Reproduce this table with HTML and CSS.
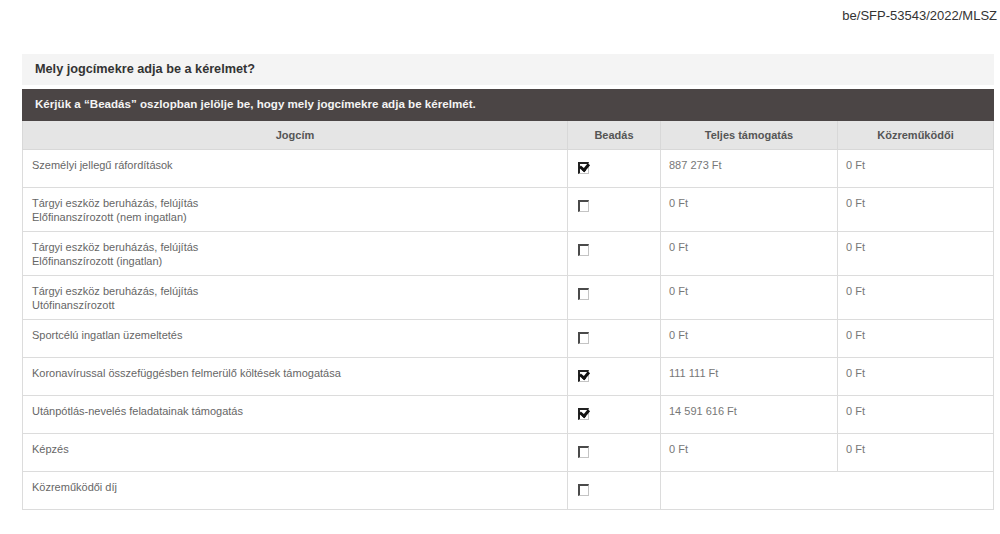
FILE: index.html
```html
<!DOCTYPE html>
<html lang="hu">
<head>
<meta charset="utf-8">
<title>Jogcímek</title>
<link rel="stylesheet" href="styles.css">
</head>
<body>
<div class="ref">be/SFP-53543/2022/MLSZ</div>
<main class="panel">
  <div class="question">Mely jogcímekre adja be a kérelmet?</div>
  <div class="notice">Kérjük a “Beadás” oszlopban jelölje be, hogy mely jogcímekre adja be kérelmét.</div>
  <table class="grid">
    <colgroup>
      <col class="c-title"><col class="c-check"><col class="c-total"><col class="c-fee">
    </colgroup>
    <thead>
      <tr><th>Jogcím</th><th>Beadás</th><th>Teljes támogatás</th><th>Közreműködői</th></tr>
    </thead>
    <tbody>
      <tr><td>Személyi jellegű ráfordítások</td><td><span class="cb on"></span></td><td>887 273 Ft</td><td>0 Ft</td></tr>
      <tr><td>Tárgyi eszköz beruházás, felújítás<br>Előfinanszírozott (nem ingatlan)</td><td><span class="cb"></span></td><td>0 Ft</td><td>0 Ft</td></tr>
      <tr><td>Tárgyi eszköz beruházás, felújítás<br>Előfinanszírozott (ingatlan)</td><td><span class="cb"></span></td><td>0 Ft</td><td>0 Ft</td></tr>
      <tr><td>Tárgyi eszköz beruházás, felújítás<br>Utófinanszírozott</td><td><span class="cb"></span></td><td>0 Ft</td><td>0 Ft</td></tr>
      <tr><td>Sportcélú ingatlan üzemeltetés</td><td><span class="cb"></span></td><td>0 Ft</td><td>0 Ft</td></tr>
      <tr><td>Koronavírussal összefüggésben felmerülő költések támogatása</td><td><span class="cb on"></span></td><td>111 111 Ft</td><td>0 Ft</td></tr>
      <tr><td>Utánpótlás-nevelés feladatainak támogatás</td><td><span class="cb on"></span></td><td>14 591 616 Ft</td><td>0 Ft</td></tr>
      <tr><td>Képzés</td><td><span class="cb"></span></td><td>0 Ft</td><td>0 Ft</td></tr>
      <tr><td>Közreműködői díj</td><td><span class="cb"></span></td><td colspan="2"></td></tr>
    </tbody>
  </table>
</main>
</body>
</html>
```
FILE: styles.css
```css
body {
  margin: 0;
  font-family: "Liberation Sans", Arial, sans-serif;
  color: #333;
  background: #fff;
}
.ref {
  font-size: 13px;
  line-height: 15px;
  text-align: right;
  padding: 8px 3px 0 0;
  color: #333;
}
.panel {
  margin: 31px 6px 0 22px;
}
.question {
  background: #f4f4f4;
  font-weight: bold;
  font-size: 12.7px;
  line-height: 15px;
  padding: 8px 13px;
  color: #333;
}
.notice {
  margin-top: 4px;
  background: #4b4545;
  color: #f4f4f4;
  font-weight: bold;
  font-size: 11.6px;
  line-height: 14px;
  padding: 8px 13px 10px;
}
.grid {
  width: 100%;
  border-collapse: collapse;
  table-layout: fixed;
  font-size: 11px;
  line-height: 14px;
}
.c-title { width: 545px; }
.c-check { width: 93px; }
.c-total { width: 177px; }
.grid th {
  background: #e5e5e5;
  color: #555;
  font-weight: bold;
  text-align: center;
  padding: 7px 8px;
  border: 1px solid #d8d8d8;
  border-top: none;
}
.grid td {
  vertical-align: top;
  padding: 8px 8px 7px 9px;
  border: 1px solid #dcdcdc;
  color: #666;
}
.grid td:nth-child(3), .grid td:nth-child(4) {
  color: #777;
  padding-left: 8px;
}
.cb {
  display: block;
  width: 8px;
  height: 9px;
  margin: 4px 0 6px 1px;
  border-top: 2px solid #4a4a4a;
  border-left: 2px solid #4a4a4a;
  border-right: 1px solid #c4c4c4;
  border-bottom: 1px solid #c4c4c4;
  background: #fff;
  position: relative;
}
.cb.on {
  border-top-color: #222;
  border-left-color: #222;
}
.cb.on::after {
  content: "";
  position: absolute;
  left: 0px;
  top: -1px;
  width: 6px;
  height: 4px;
  border-left: 3px solid #111;
  border-bottom: 3px solid #111;
  transform: rotate(-50deg);
}
```
